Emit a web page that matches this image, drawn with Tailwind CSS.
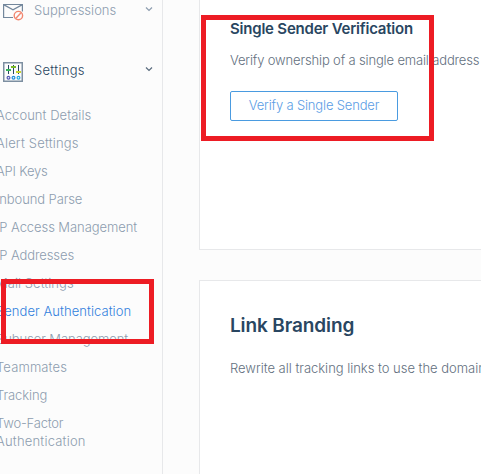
<!DOCTYPE html>
<html lang="en">
<head>
<meta charset="utf-8">
<title>Sender Authentication</title>
<script src="https://cdn.jsdelivr.net/npm/@tailwindcss/browser@4"></script>
</head>
<body class="relative flex h-[474px] w-[481px] overflow-hidden bg-[#fcfcfc] font-['Inter','Liberation_Sans',sans-serif] text-[13px] leading-[18px] text-[#637080]">
  <nav class="h-full w-[163px] shrink-0 border-r border-[#e7e8ea] text-[#8d9daf]">
    <div class="flex h-[41px] items-start pl-[3px]">
      <svg class="mt-[3px] shrink-0" width="21" height="18" viewBox="0 0 21 18" fill="none">
        <path d="M10 14.500H.6V1.500h18.800v7M.6 1.600 10 6.800l9.400-5.200" stroke="#73879c" stroke-width="1.200"/>
        <circle cx="15.400" cy="12.600" r="4.200" stroke="#f2866f" stroke-width="1.400" fill="#fcfcfc"/>
        <path d="m12.700 15.400 5.400-5.600" stroke="#f2866f" stroke-width="1.400"/>
      </svg>
      <span class="ml-[10px] mt-[1px] w-[111px] font-light"><span class="tracking-[0.02px]">Suppressions</span></span>
      <svg class="mt-[6px]" width="8" height="6" viewBox="0 0 8 6" fill="none" stroke="#8d9daf" stroke-width="1.200"><path d="m1 1.500 3 3 3-3"/></svg>
    </div>
    <div class="flex h-[60px] items-start pl-[3px] pt-[20px] text-[#294661]">
      <svg class="mt-[1px] shrink-0" width="20" height="20" viewBox="0 0 20 20" fill="none">
        <path d="M.75.75h18.500v18.500H.75z" stroke="#7d8fa1" stroke-width="1.500"/>
        <path d="M5.500 3v9M10.500 3v9M15.500 3v9" stroke="#294661"/>
        <path d="M3 8h5" stroke="#35b558" stroke-width="2"/><path d="M8 5h5" stroke="#79b928" stroke-width="2"/><path d="M13 10h5" stroke="#c9d52d" stroke-width="2"/>
        <circle cx="5.500" cy="15.800" r="1.400" stroke="#5358b5" stroke-width="1.200"/><circle cx="10.500" cy="15.800" r="1.400" stroke="#248fdd" stroke-width="1.200"/><circle cx="15.500" cy="15.800" r="1.400" stroke="#27a9e2" stroke-width="1.200"/>
      </svg>
      <span class="ml-[11px] w-[111px] font-light"><span class="tracking-[0.3px]">Settings</span></span>
      <svg class="mt-[5px]" width="8" height="6" viewBox="0 0 8 6" fill="none" stroke="#596b7d" stroke-width="1.200"><path d="m1 1.500 3 3 3-3"/></svg>
    </div>
    <ul class="-ml-[4px] whitespace-nowrap font-light">
      <li class="py-[5px]"><span class="tracking-[0.05px]">Account Details</span></li>
      <li class="py-[5px]"><span class="tracking-[0.18px]">Alert Settings</span></li>
      <li class="py-[5px]"><span class="tracking-[-0.2px]">API Keys</span></li>
      <li class="py-[5px]"><span class="tracking-[-0.1px]">Inbound Parse</span></li>
      <li class="py-[5px]"><span class="tracking-[-0.07px]">IP Access Management</span></li>
      <li class="py-[5px]"><span class="tracking-[-0.1px]">IP Addresses</span></li>
      <li class="py-[5px]"><span class="tracking-[0.05px]">Mail Settings</span></li>
      <li class="py-[5px] text-[#327fdc]"><span class="tracking-[0.06px]">Sender Authentication</span></li>
      <li class="py-[5px]"><span class="tracking-[-0.07px]">Subuser Management</span></li>
      <li class="py-[5px]"><span class="tracking-[0.12px]">Teammates</span></li>
      <li class="py-[5px]"><span class="tracking-[-0.1px]">Tracking</span></li>
      <li class="py-[5px]"><span class="tracking-[-0.2px]">Two-Factor</span><br><span class="tracking-[0.2px]">Authentication</span></li>
    </ul>
  </nav>
  <main class="ml-[36px] flex w-[282px] shrink-0 flex-col gap-[30px] whitespace-nowrap">
    <section class="h-[250px] shrink-0 border-b border-l border-[#e7e8ea] bg-white pl-[30px] pt-[20px]">
      <h3 class="text-[15px] font-semibold leading-[18px] text-[#294661]"><span class="tracking-[-0.21px]">Single Sender Verification</span></h3>
      <p class="mt-[13px] font-light"><span class="tracking-[-0.15px]">Verify ownership of a single email address</span></p>
      <button class="mt-[22px] flex h-[30px] w-[168px] items-center justify-center rounded-[2px] border border-[#4a9be0] pb-[2px] font-light text-[#5b9de5]"><span class="tracking-[-0.16px]">Verify a Single Sender</span></button>
    </section>
    <section class="h-[194px] shrink-0 border-l border-t border-[#e7e8ea] bg-white pl-[30px] pt-[33px]">
      <h2 class="text-[19px] font-semibold leading-[24px] text-[#294661]"><span class="tracking-[-0.12px]">Link Branding</span></h2>
      <p class="mt-[21px] font-light"><span class="tracking-[-0.02px]">Rewrite all tracking links to use the domain</span></p>
    </section>
  </main>
  <div class="absolute left-[201px] top-[15px] h-[126px] w-[233px] border-[5px] border-[#ed1c24]"></div>
  <div class="absolute left-[1px] top-[279px] h-[65px] w-[153px] border-[5px] border-[#ed1c24]"></div>
</body>
</html>
